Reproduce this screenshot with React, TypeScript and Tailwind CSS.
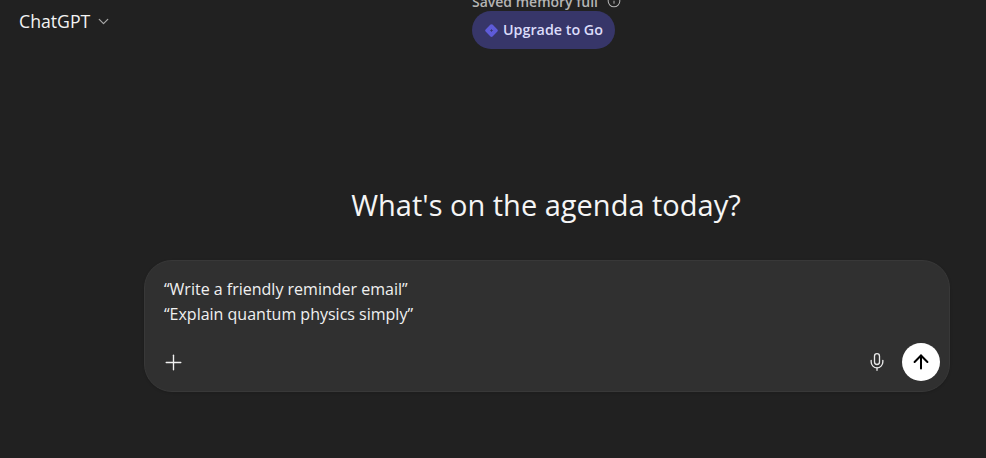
import React from 'react';
import { ChevronDown, Info, Plus, Mic, ArrowUp } from 'lucide-react';

const font = { fontFamily: '"Open Sans", "Noto Sans", sans-serif' };

export default function App() {
  return (
    <div style={font} className="h-[458px] w-[986px] overflow-hidden bg-[#212121] text-white">
      {/* Top bar */}
      <div className="flex h-[49px] items-start">
        <div className="flex w-[472px] items-center gap-[5px] pl-[19px] pt-[9px]">
          <span className="text-[17.7px] leading-6 text-[#f3f3f3]">ChatGPT</span>
          <ChevronDown className="h-[17px] w-[17px] text-[#a8a8a8]" strokeWidth={1.75} />
        </div>
        <div className="-mt-[9px] flex flex-col items-start">
          <div className="flex h-5 items-center gap-[9px] text-[14px] font-semibold text-[#b4b4b4]">
            <span>Saved memory full</span>
            <Info className="h-[14px] w-[14px]" strokeWidth={1.75} />
          </div>
          <button className="flex h-[38px] w-[143px] items-center gap-[4px] rounded-full bg-[#373669] pl-[12px] text-[14.3px] font-semibold text-[#dcdcfa]">
            <svg viewBox="0 0 16 16" className="h-[15px] w-[15px]">
              <path d="M8 1.2a1.6 1.6 0 0 1 1.1.5l5.2 5.2a1.6 1.6 0 0 1 0 2.2l-5.2 5.2a1.6 1.6 0 0 1-2.2 0L1.7 9.100a1.6 1.6 0 0 1 0-2.200l5.200-5.200A1.6 1.6 0 0 1 8 1.200z" fill="#5e5bd8" />
              <path d="M8 6.600v2.800M6.600 8h2.800" stroke="#373669" strokeWidth="0.9" />
            </svg>
            <span className="-mt-[1px]">Upgrade to Go</span>
          </button>
        </div>
      </div>

      {/* Heading */}
      <div className="pl-[106px] pt-[136px] text-center">
        <h1 className="text-[29px] font-normal leading-10 text-[#f5f5f5]">What's on the agenda today?</h1>
      </div>

      {/* Composer */}
      <div className="pl-[144px] pr-[36px] pt-[35px]">
        <div className="flex h-[132px] flex-col rounded-[28px] border border-[#383838] bg-[#303030] pl-[19px] pr-[9px] shadow-sm">
          <div className="pt-[16px] text-[16px] leading-[25px] text-[#f0f0f0]">
            <p>“Write a friendly reminder email”</p>
            <p>“Explain quantum physics simply”</p>
          </div>
          <div className="mt-[16px] flex items-center justify-between">
            <Plus className="-ml-[3px] h-[25px] w-[25px] text-[#f0f0f0]" strokeWidth={1.3} />
            <div className="flex items-center gap-[15px]">
              <Mic className="h-[20px] w-[20px] text-[#e8e8e8]" strokeWidth={1.6} />
              <button className="flex h-[38px] w-[38px] items-center justify-center rounded-full bg-white">
                <ArrowUp className="h-[22px] w-[22px] text-black" strokeWidth={2.2} />
              </button>
            </div>
          </div>
        </div>
      </div>
    </div>
  );
}
